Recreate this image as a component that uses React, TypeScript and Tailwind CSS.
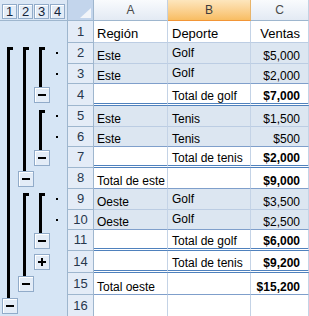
import React from "react";

type Seg = "start" | "line" | "minus" | "plus" | "dot" | null;

type Row = {
    n: number;
    h: string;
    outline: Seg[];
    a?: string;
    b?: string;
    c?: string;
    fill?: boolean;
    bold?: boolean;
    header?: boolean;
    bottom?: "double" | "blue" | "light";
    lowB?: boolean;
};

const rows: Row[] = [
    { n: 1, h: "h-[22px]", outline: [null, null, null, null], a: "Región", b: "Deporte", c: "Ventas", header: true },
    { n: 2, h: "h-[21px]", outline: ["start", "start", "start", "dot"], a: "Este", b: "Golf", c: "$5,000", fill: true, lowB: true },
    { n: 3, h: "h-[20px]", outline: ["line", "line", "line", "dot"], a: "Este", b: "Golf", c: "$2,000", fill: true, lowB: true, bottom: "blue" },
    { n: 4, h: "h-[22px]", outline: ["line", "line", "minus", null], b: "Total de golf", c: "$7,000", bold: true, bottom: "double" },
    { n: 5, h: "h-[21px]", outline: ["line", "line", "start", "dot"], a: "Este", b: "Tenis", c: "$1,500", fill: true },
    { n: 6, h: "h-[20px]", outline: ["line", "line", "line", "dot"], a: "Este", b: "Tenis", c: "$500", fill: true, bottom: "blue" },
    { n: 7, h: "h-[21px]", outline: ["line", "line", "minus", null], b: "Total de tenis", c: "$2,000", bold: true, bottom: "double" },
    { n: 8, h: "h-[21px]", outline: ["line", "minus", null, null], a: "Total de este", c: "$9,000", bold: true, bottom: "blue" },
    { n: 9, h: "h-[21px]", outline: ["line", "start", "start", "dot"], a: "Oeste", b: "Golf", c: "$3,500", fill: true, lowB: true },
    { n: 10, h: "h-[20px]", outline: ["line", "line", "line", "dot"], a: "Oeste", b: "Golf", c: "$2,500", fill: true, lowB: true, bottom: "blue" },
    { n: 11, h: "h-[21px]", outline: ["line", "line", "minus", null], b: "Total de golf", c: "$6,000", bold: true, bottom: "double" },
    { n: 14, h: "h-[22px]", outline: ["line", "line", "plus", null], b: "Total de tenis", c: "$9,200", bold: true, bottom: "double" },
    { n: 15, h: "h-[22px]", outline: ["line", "minus", null, null], a: "Total oeste", c: "$15,200", bold: true, bottom: "blue" },
    { n: 16, h: "h-[22px]", outline: ["minus", null, null, null] },
];

// outline level columns: width + left pad so the buttons land where excel puts them
const levelCols = ["w-[17px] pl-[2px]", "w-[16px] pl-[1px]", "w-[17px] pl-[1px]", "w-[17px]"];

const OutlineButton = ({ plus }: { plus?: boolean }) => (
    <div className="w-[16px] h-[16px] shrink-0 border border-[#91abc9] bg-[#e3ecf7] shadow-[inset_1px_1px_0_#ffffff] flex items-center justify-center">
        {plus ? (
            <div className="relative w-[8px] h-[8px]">
                <div className="absolute left-0 top-[3px] w-[8px] h-[2px] bg-black" />
                <div className="absolute left-[3px] top-0 w-[2px] h-[8px] bg-black" />
            </div>
        ) : (
            <div className="w-[8px] h-[2px] bg-black" />
        )}
    </div>
);

const Segment = ({ seg }: { seg: Seg }) => {
    if (seg === "start")
        return (
            <div className="flex flex-col h-full pt-[4px]">
                <div className="ml-[5px] w-[6px] h-[3px] bg-black shrink-0" />
                <div className="ml-[5px] w-[3px] flex-1 bg-black" />
            </div>
        );
    if (seg === "line") return <div className="ml-[5px] w-[3px] h-full bg-black" />;
    if (seg === "minus")
        return (
            <div className="flex flex-col h-full">
                <div className="ml-[5px] w-[3px] flex-1 bg-black" />
                <OutlineButton />
                <div className="flex-1" />
            </div>
        );
    if (seg === "plus")
        return (
            <div className="flex flex-col h-full">
                <div className="flex-1" />
                <OutlineButton plus />
                <div className="flex-1" />
            </div>
        );
    if (seg === "dot") return <div className="ml-[6px] mt-[9px] w-[2px] h-[2px] bg-black" />;
    return null;
};

const HeaderCell = ({ label, w, active }: { label: string; w: string; active?: boolean }) => (
    <div
        className={`${w} h-full flex items-center justify-center text-[12px] border-r border-b ${
            active
                ? "bg-gradient-to-b from-[#fde6bd] to-[#f8bd62] border-r-[#e8b46a] border-b-[#f29536] text-[#3c3c3c]"
                : "bg-gradient-to-b from-[#f9fbfd] to-[#e3eaf4] border-r-[#c3d1e2] border-b-[#9eb6ce] text-[#4a4a4a]"
        }`}
    >
        {label}
    </div>
);

export default function App() {
    return (
        <div className="w-[309px] h-[316px] overflow-hidden bg-white font-['Liberation_Sans',Arial,sans-serif] text-black">
            {/* column header strip */}
            <div className="flex h-[21px]">
                <div className="w-[68px] shrink-0 bg-[#dbe7f5] border-r border-b border-[#9eb6ce] flex gap-[1px] pl-[2px] pt-[4px]">
                    {[1, 2, 3, 4].map((l) => (
                        <div
                            key={l}
                            className="w-[15px] h-[15px] border border-[#91abc9] bg-[#e3ecf7] shadow-[inset_1px_1px_0_#ffffff] flex items-center justify-center text-[13px] leading-none text-[#14243a]"
                        >
                            {l}
                        </div>
                    ))}
                </div>
                <div className="w-[26px] shrink-0 bg-[#c3d5ec] border-r border-b border-[#9eb6ce] flex items-end justify-end pr-[2px] pb-[2px]">
                    <div className="w-0 h-0 border-l-[11px] border-l-transparent border-b-[10px] border-b-[#f2f5f9]" />
                </div>
                <HeaderCell label="A" w="w-[74px] shrink-0" />
                <HeaderCell label="B" w="w-[83px] shrink-0" active />
                <HeaderCell label="C" w="flex-1" />
            </div>

            {rows.map((r) => {
                const bottom =
                    r.bottom === "double"
                        ? "border-b-[3px] border-double border-b-[#4f81bd]"
                        : r.bottom === "blue"
                        ? "border-b border-b-[#7f9fcb]"
                        : "border-b border-b-[#bccde3]";
                const bg = r.fill ? "bg-[#dce6f1]" : "bg-white";
                const size = r.header ? "text-[13px] leading-[15px] pb-[1px]" : "text-[12px] leading-[14px]";
                const weight = r.bold ? "font-bold" : "";
                const cell = `h-full flex items-end border-r border-r-[#c4d3e6] ${bottom} ${bg} ${size}`;
                return (
                    <div key={r.n} className={`flex ${r.h}`}>
                        <div className="w-[68px] shrink-0 h-full bg-[#d6e5f5] border-r border-[#9eb6ce] flex">
                            {r.outline.map((s, i) => (
                                <div key={i} className={`${levelCols[i]} shrink-0 h-full`}>
                                    <Segment seg={s} />
                                </div>
                            ))}
                        </div>
                        <div className="w-[26px] shrink-0 h-full bg-[#e4ecf7] border-r border-b border-[#9eb6ce] flex items-center justify-center text-[13px] text-[#27374d]">
                            {r.n}
                        </div>
                        <div className={`w-[74px] shrink-0 pl-[3px] ${cell}`}>
                            <span className="whitespace-nowrap">{r.a}</span>
                        </div>
                        <div className={`w-[83px] shrink-0 pl-[4px] ${cell} ${r.lowB ? "pb-[3px]" : ""}`}>
                            <span className="whitespace-nowrap">{r.b}</span>
                        </div>
                        <div className={`flex-1 justify-end pr-[8px] ${cell} ${weight}`}>
                            <span className="whitespace-nowrap">{r.c}</span>
                        </div>
                    </div>
                );
            })}
        </div>
    );
}
